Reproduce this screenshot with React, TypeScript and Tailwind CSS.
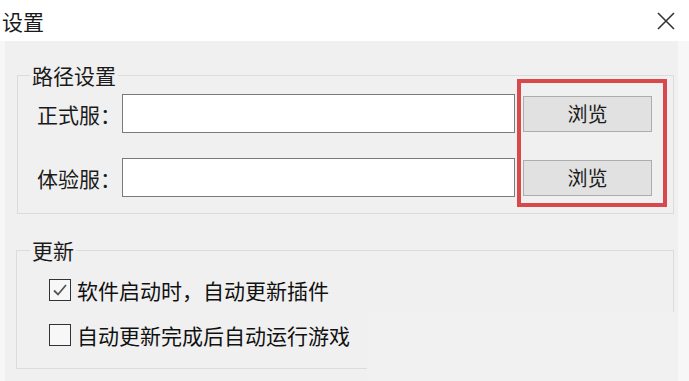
const font = 'font-["Noto_Sans_CJK_SC","Microsoft_YaHei",sans-serif]'

const PathRow = ({ label }: { label: string }) => (
  <div className="flex items-center">
    <span className="w-[85px] text-[21px] leading-[24px] text-[#1a1a1a]">{label}</span>
    <div className="w-[393px] h-[39px] bg-white border border-[#7a7a7a]" />
    <button className="ml-[8px] w-[129px] h-[36px] bg-[#e1e1e1] border border-[#adadad] text-[20px] leading-[24px] text-[#1a1a1a]">
      浏览
    </button>
  </div>
)

const CheckRow = ({ label, checked }: { label: string; checked?: boolean }) => (
  <div className="flex items-center h-[24px]">
    <span className="w-[22px] h-[22px] border-[1.5px] border-[#333] bg-[#f7f7f7] flex items-center justify-center">
      {checked && (
        <svg width="18" height="18" viewBox="0 0 18 18" fill="none">
          <path d="M3 9.5 L7 13.5 L15 4" stroke="#555" strokeWidth="1.8" />
        </svg>
      )}
    </span>
    <span className="ml-[6px] text-[21px] leading-[24px] text-[#111]">{label}</span>
  </div>
)

export default function App() {
  return (
    <div className={`relative w-[689px] h-[381px] overflow-hidden bg-[#f7f7f7] ${font}`}>
      <div className="h-[41px] bg-white flex items-center justify-between pl-[2px] pr-[14px]">
        <span className="text-[21px] leading-[24px] text-[#1a1a1a]">设置</span>
        <svg width="18" height="18" viewBox="0 0 18 18" fill="none">
          <path d="M1 1 L17 17 M17 1 L1 17" stroke="#333" strokeWidth="1.6" />
        </svg>
      </div>

      <div className="ml-[5px] w-[673px] h-[340px] bg-[#f0f0f0] pt-[23px] pl-[12px]">
        <fieldset className="w-[657px] border border-[#dcdcdc] pb-[16px]">
          <legend className="ml-[12px] px-[2px] text-[21px] leading-[22px] text-[#1a1a1a]">路径设置</legend>
          <div className="mt-[8px] pl-[19px] flex flex-col gap-[25px]">
            <PathRow label="正式服：" />
            <PathRow label="体验服：" />
          </div>
        </fieldset>

        <fieldset className="mt-[25px] -ml-[1px] w-[658px] border border-[#dcdcdc] pb-[21px]">
          <legend className="ml-[13px] px-[2px] text-[21px] leading-[22px] text-[#1a1a1a]">更新</legend>
          <div className="mt-[17px] pl-[32px] flex flex-col gap-[21px]">
            <CheckRow label="软件启动时，自动更新插件" checked />
            <CheckRow label="自动更新完成后自动运行游戏" />
          </div>
        </fieldset>
      </div>

      {/* red highlight annotation */}
      <div className="absolute left-[517px] top-[79px] w-[150px] h-[128px] border-[4px] border-[#d9484a]" />
      {/* blank patch from the cropped capture */}
      <div className="absolute left-[367px] top-[312px] w-[311px] h-[69px] bg-[#f1f1f1]" />
    </div>
  )
}
